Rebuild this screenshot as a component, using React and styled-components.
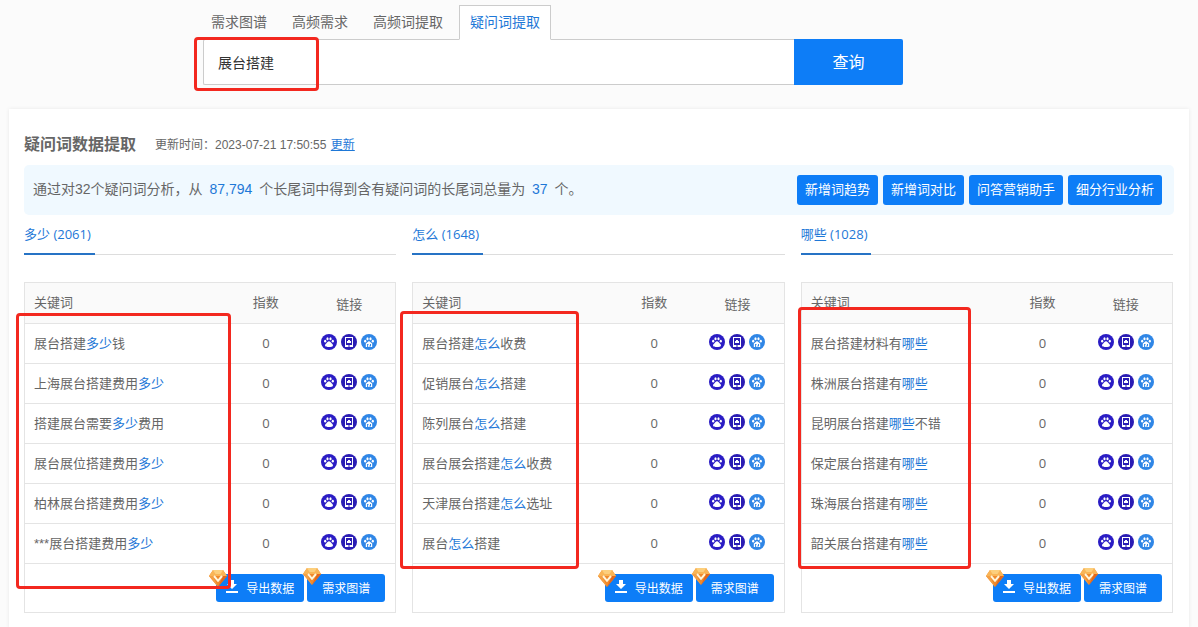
import React, { useState } from "react";
import styled, { createGlobalStyle } from "styled-components";

const GlobalStyle = createGlobalStyle`
  * {
    box-sizing: border-box;
  }
  body {
    margin: 0;
    background: #fbfbfb;
    color: #666;
    font-family: "Liberation Sans", "Noto Sans CJK SC", sans-serif;
    font-size: 13px;
  }
  button, input {
    font-family: inherit;
  }
  a {
    color: #1e78d7;
  }
`;

const columns = [
  {
    word: "多少",
    total: 2061,
    keywords: [
      "展台搭建多少钱",
      "上海展台搭建费用多少",
      "搭建展台需要多少费用",
      "展台展位搭建费用多少",
      "柏林展台搭建费用多少",
      "***展台搭建费用多少",
    ],
    mark: { top: 31, left: -8, width: 215, height: 276 },
  },
  {
    word: "怎么",
    total: 1648,
    keywords: [
      "展台搭建怎么收费",
      "促销展台怎么搭建",
      "陈列展台怎么搭建",
      "展台展会搭建怎么收费",
      "天津展台搭建怎么选址",
      "展台怎么搭建",
    ],
    mark: { top: 29, left: -12, width: 179, height: 258 },
  },
  {
    word: "哪些",
    total: 1028,
    keywords: [
      "展台搭建材料有哪些",
      "株洲展台搭建有哪些",
      "昆明展台搭建哪些不错",
      "保定展台搭建有哪些",
      "珠海展台搭建有哪些",
      "韶关展台搭建有哪些",
    ],
    mark: { top: 25, left: -3, width: 173, height: 262 },
  },
];

const tabs = ["需求图谱", "高频需求", "高频词提取", "疑问词提取"];
const actions = ["新增词趋势", "新增词对比", "问答营销助手", "细分行业分析"];

const Top = styled.header`
  display: flex;
  justify-content: center;
  padding: 5px 92px 24px 0;
`;

const SearchArea = styled.div`
  width: 100%;
  max-width: 700px;
`;

const Tabs = styled.nav`
  display: flex;
  gap: 9px;
  height: 34px;
`;

const Tab = styled.button`
  position: relative;
  z-index: 1;
  height: 35px;
  margin: 0 ${({ $active }) => ($active ? -1 : 0)}px;
  padding: 0 ${({ $active }) => ($active ? 10 : 7)}px;
  font-size: 14px;
  line-height: 33px;
  border: 1px solid ${({ $active }) => ($active ? "#ccc" : "transparent")};
  border-bottom-color: ${({ $active }) => ($active ? "#fff" : "transparent")};
  background: ${({ $active }) => ($active ? "#fff" : "transparent")};
  color: ${({ $active }) => ($active ? "#1e78d7" : "#666")};
  cursor: pointer;
`;

const SearchForm = styled.form`
  position: relative;
  display: flex;
  height: 46px;
`;

const SearchInput = styled.input`
  flex: 1;
  min-width: 0;
  padding: 0 14px;
  font-size: 14px;
  color: #333;
  background: #fff;
  border: 1px solid #ccc;
  border-right: 0;
  border-radius: 2px 0 0 2px;
  outline: none;
`;

const SearchButton = styled.button`
  width: 109px;
  padding-bottom: 3px;
  border: 0;
  border-radius: 0 2px 2px 0;
  background: #0d7df7;
  color: #fff;
  font-size: 16px;
  cursor: pointer;
`;

const Mark = styled.div`
  position: absolute;
  z-index: 2;
  top: ${({ $box }) => $box.top}px;
  left: ${({ $box }) => $box.left}px;
  width: ${({ $box }) => $box.width}px;
  height: ${({ $box }) => $box.height}px;
  border: 3px solid #f3281f;
  border-radius: 4px;
  pointer-events: none;
`;

const Card = styled.main`
  margin: 0 9px;
  padding: 15px;
  background: #fff;
  box-shadow: 0 0 4px rgba(0, 0, 0, 0.08);
`;

const CardHead = styled.div`
  display: flex;
  align-items: center;
  gap: 19px;
  height: 41px;
  padding-bottom: 3px;
`;

const Title = styled.h1`
  margin: 0;
  font-size: 16px;
  font-weight: 700;
`;

const Updated = styled.span`
  font-size: 12px;
`;

const UpdateLink = styled.a`
  margin-left: 1px;
`;

const Summary = styled.div`
  display: flex;
  align-items: center;
  justify-content: space-between;
  min-height: 50px;
  padding: 0 12px 0 9px;
  background: #f0f9ff;
  border-radius: 5px;
`;

const SummaryText = styled.p`
  margin: 0;
  padding-bottom: 2px;
  font-size: 14px;
  line-height: 20px;
`;

const Count = styled.span`
  margin: 0 3px;
  color: #1e78d7;
`;

const Actions = styled.div`
  display: flex;
  gap: 5px;
`;

const ActionButton = styled.button`
  height: 30px;
  padding: 0 8px 4px;
  border: 0;
  border-radius: 3px;
  background: #0d7df7;
  color: #fff;
  font-size: 13px;
  white-space: nowrap;
  cursor: pointer;
`;

const Columns = styled.div`
  display: grid;
  grid-template-columns: repeat(3, 1fr);
  gap: 16px;
  padding-right: 1px;
`;

const PanelHead = styled.div`
  display: flex;
  height: 40px;
  margin-bottom: 27px;
  border-bottom: 1px solid #ddd;
`;

const PanelTitle = styled.h2`
  height: 40px;
  margin: 0;
  padding-right: 4px;
  border-bottom: 2px solid #2673c5;
  color: #1e78d7;
  font-family: "Open Sans", "Noto Sans CJK SC", sans-serif;
  font-size: 13px;
  font-weight: 400;
  line-height: 38px;
`;

const TableWrap = styled.div`
  position: relative;
`;

const Table = styled.table`
  width: 100%;
  table-layout: fixed;
  border-collapse: collapse;
  border: 1px solid #e4e4e4;
`;

const Row = styled.tr`
  height: 40px;
  border-bottom: 1px solid #e4e4e4;
`;

const HeadRow = styled(Row)`
  height: 41px;
  background: #fafafa;
`;

const Th = styled.th`
  width: ${({ $width }) => $width || "auto"};
  padding: 0 0 ${({ $low }) => ($low ? 0 : 4)}px ${({ $first }) => ($first ? 9 : 0)}px;
  text-align: ${({ $first }) => ($first ? "left" : "center")};
  font-weight: 400;
`;

const Keyword = styled.td`
  padding: 0 0 0 9px;
  line-height: 20px;
`;

const Index = styled.td`
  padding: 0 0 2px;
  text-align: center;
  font-family: "Open Sans", sans-serif;
`;

const Links = styled.td`
  padding: 0;
`;

const LinkList = styled.div`
  display: flex;
  justify-content: center;
  gap: 4px;
  padding-bottom: 4px;
`;

const IconLink = styled.a`
  display: block;
  width: 16px;
  height: 16px;
`;

const Foot = styled.td`
  height: 49px;
  padding: 0 10px;
`;

const FootActions = styled.div`
  display: flex;
  justify-content: flex-end;
  gap: 3px;
`;

const FootButton = styled.button`
  position: relative;
  display: flex;
  align-items: center;
  justify-content: center;
  gap: 8px;
  width: ${({ $width }) => $width}px;
  height: 28px;
  padding: 0 0 2px;
  border: 0;
  border-radius: 3px;
  background: #0d7df7;
  color: #fff;
  font-size: 12px;
  cursor: pointer;
`;

const GemBadge = styled.span`
  position: absolute;
  top: ${({ $top }) => $top}px;
  left: ${({ $left }) => $left}px;
  display: flex;
`;

const Highlight = styled.a`
  text-decoration: none;
`;

const PawToes = () => (
  <>
    <ellipse cx="4.2" cy="7.2" rx="1.1" ry="1.4" />
    <ellipse cx="6.5" cy="4.7" rx="1.1" ry="1.5" />
    <ellipse cx="9.5" cy="4.7" rx="1.1" ry="1.5" />
    <ellipse cx="11.8" cy="7.2" rx="1.1" ry="1.4" />
  </>
);

const PawIcon = () => (
  <svg width="16" height="16" viewBox="0 0 16 16" fill="#fff">
    <circle cx="8" cy="8" r="8" fill="#2a1cc4" />
    <PawToes />
    <path d="M8 7.2c-1.300 0-1.700 1.200-2.600 2-1.100.9-1.600 1.600-1.300 2.600.4 1.300 1.800 1.100 3.900 1.100s3.500.2 3.900-1.100c.3-1-.2-1.700-1.300-2.600-.9-.8-1.300-2-2.600-2z" />
  </svg>
);

const MobileIcon = () => (
  <svg width="16" height="16" viewBox="0 0 16 16">
    <circle cx="8" cy="8" r="8" fill="#2a1cb4" />
    <path fillRule="evenodd" fill="#fff" d="M4 3h8v10H4zM5 4v7h6V4zM7 11.500v1h2v-1z" />
    <path d="M6 9V7h1V6h2v1h1v2z" fill="#fff" />
  </svg>
);

const StationIcon = () => (
  <svg width="16" height="16" viewBox="0 0 16 16" fill="#fff">
    <circle cx="8" cy="8" r="8" fill="#2f86e6" />
    <PawToes />
    <path d="M8 7 4.800 9.600V13H6v-3h1l2 2v-2h1v3h1.200V9.600z" />
    <path d="M6.900 10.500V13h.9v-1L9 13h.8v-.6z" />
  </svg>
);

const DownloadIcon = () => (
  <svg width="12" height="14" viewBox="0 0 12 14" fill="#fff">
    <path d="M4 0h4v4h3L6 9 1 4h3zM0 11h12v2H0z" />
  </svg>
);

const GemIcon = () => (
  <svg width="18" height="17" viewBox="0 0 18 17">
    <path d="M4 0h10l4 6-9 11L0 6z" fill="#f08a2c" />
    <path d="M4 0h10l4 6H0z" fill="#f9b557" />
    <path d="M4 0h10l-2.500 4h-5z" fill="#fccf7d" />
    <path d="M0 6h4l5 11z" fill="#f5a044" />
    <path d="M18 6h-4L9 17z" fill="#e3671c" />
    <path d="M5 6l4 4.800L13 6" fill="none" stroke="#fff6dc" strokeWidth="2" />
  </svg>
);

const linkIcons = [
  { label: "百度", Icon: PawIcon },
  { label: "百度移动", Icon: MobileIcon },
  { label: "百度站长", Icon: StationIcon },
];

const KeywordText = ({ text, word }) => {
  const [before, after] = text.split(word);
  return (
    <>
      {before}
      <Highlight href="#">{word}</Highlight>
      {after}
    </>
  );
};

const Panel = ({ word, total, keywords, mark }) => (
  <section>
    <PanelHead>
      <PanelTitle>
        {word} ({total})
      </PanelTitle>
    </PanelHead>
    <TableWrap>
      <Table>
        <thead>
          <HeadRow>
            <Th $first>关键词</Th>
            <Th $width="20%">指数</Th>
            <Th $width="25%" $low>链接</Th>
          </HeadRow>
        </thead>
        <tbody>
          {keywords.map((text) => (
            <Row key={text}>
              <Keyword>
                <KeywordText text={text} word={word} />
              </Keyword>
              <Index>0</Index>
              <Links>
                <LinkList>
                  {linkIcons.map(({ label, Icon }) => (
                    <IconLink key={label} href="#" aria-label={label}>
                      <Icon />
                    </IconLink>
                  ))}
                </LinkList>
              </Links>
            </Row>
          ))}
        </tbody>
        <tfoot>
          <tr>
            <Foot colSpan={3}>
              <FootActions>
                <FootButton type="button" $width={88}>
                  <GemBadge $top={-4} $left={-7}>
                    <GemIcon />
                  </GemBadge>
                  <DownloadIcon />
                  导出数据
                </FootButton>
                <FootButton type="button" $width={78}>
                  <GemBadge $top={-6} $left={-4}>
                    <GemIcon />
                  </GemBadge>
                  需求图谱
                </FootButton>
              </FootActions>
            </Foot>
          </tr>
        </tfoot>
      </Table>
      <Mark $box={mark} />
    </TableWrap>
  </section>
);

const App = () => {
  const [active, setActive] = useState("疑问词提取");
  const [query, setQuery] = useState("展台搭建");

  return (
    <>
      <GlobalStyle />
      <Top>
        <SearchArea>
          <Tabs>
            {tabs.map((tab) => (
              <Tab key={tab} type="button" $active={tab === active} onClick={() => setActive(tab)}>
                {tab}
              </Tab>
            ))}
          </Tabs>
          <SearchForm onSubmit={(e) => e.preventDefault()}>
            <SearchInput
              type="text"
              aria-label="关键词"
              value={query}
              onChange={(e) => setQuery(e.target.value)}
            />
            <SearchButton type="submit">查询</SearchButton>
            <Mark $box={{ top: -2, left: -9, width: 125, height: 54 }} />
          </SearchForm>
        </SearchArea>
      </Top>
      <Card>
        <CardHead>
          <Title>疑问词数据提取</Title>
          <Updated>
            更新时间：2023-07-21 17:50:55 <UpdateLink href="#">更新</UpdateLink>
          </Updated>
        </CardHead>
        <Summary>
          <SummaryText>
            通过对32个疑问词分析，从 <Count>87,794</Count> 个长尾词中得到含有疑问词的长尾词总量为{" "}
            <Count>37</Count> 个。
          </SummaryText>
          <Actions>
            {actions.map((label) => (
              <ActionButton key={label} type="button">
                {label}
              </ActionButton>
            ))}
          </Actions>
        </Summary>
        <Columns>
          {columns.map((column) => (
            <Panel key={column.word} {...column} />
          ))}
        </Columns>
      </Card>
    </>
  );
};

export default App;
